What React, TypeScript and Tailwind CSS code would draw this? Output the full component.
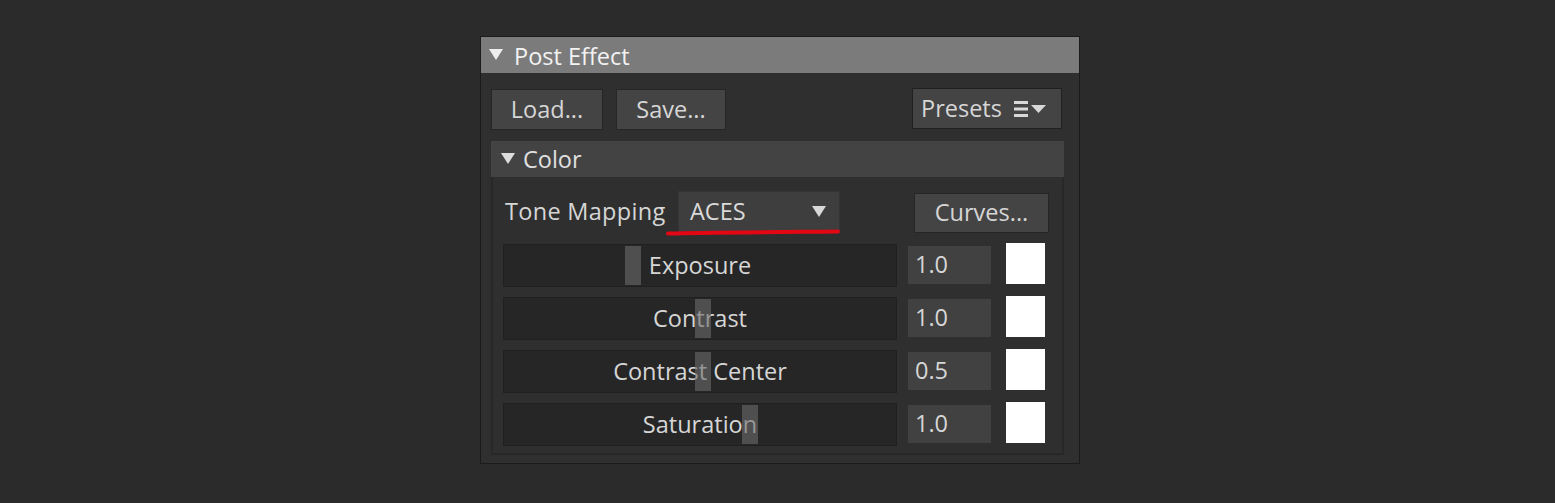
const font = { fontFamily: '"Open Sans", "Noto Sans", sans-serif' }

function Tri({ className }: { className?: string }) {
    return (
        <svg width="14" height="11" viewBox="0 0 14 11" className={className}>
            <path d="M0 0 H14 L7 11 Z" fill="currentColor" />
        </svg>
    )
}

const sliders = [
    { label: 'Exposure', value: '1.0', handle: 121 },
    { label: 'Contrast', value: '1.0', handle: 191 },
    { label: 'Contrast Center', value: '0.5', handle: 191 },
    { label: 'Saturation', value: '1.0', handle: 238 },
]

function SliderRow({ label, value, handle }: { label: string; value: string; handle: number }) {
    return (
        <div className="flex items-start h-[43px]">
            <div className="relative w-[394px] h-[43px] bg-[#262626] border border-[#202020] flex items-center justify-center text-[23.5px] text-[#d6d6d6]">
                <span>{label}</span>
                {/* slider handle drawn over the label */}
                <div
                    className="absolute top-[1px] bottom-[1px] w-[16px] bg-[#6a6a6a]/60"
                    style={{ left: handle }}
                />
            </div>
            <div className="ml-[11px] mt-[2px] w-[83px] h-[38px] bg-[#414141] flex items-center pl-[7px] text-[23.5px] text-[#d6d6d6]">
                {value}
            </div>
            <div className="ml-[15px] mt-[-1px] w-[39px] h-[41px] bg-white" />
        </div>
    )
}

export default function App() {
    return (
        <div className="w-[1555px] h-[503px] bg-[#2b2b2b] pt-[36px] pl-[480px]" style={font}>
            <div className="w-[600px] h-[428px] border border-[#1b1b1b] bg-[#2f2f2f] flex flex-col">
                {/* Header */}
                <div className="h-[36px] bg-[#7b7b7b] flex items-center pl-[8px] text-[23.5px] text-[#f2f2f2]">
                    <Tri className="text-[#eeeeee] mr-[11px] mt-[-2px]" />
                    <span className="leading-none pt-[3px]">Post Effect</span>
                </div>

                <div className="pl-[10px] pr-[15px] pt-[16px] flex flex-col">
                    {/* Load / Save / Presets */}
                    <div className="flex items-start">
                        <button className="w-[112px] h-[41px] bg-[#444444] border border-[#262626] text-[23.5px] text-[#d6d6d6]">
                            Load...
                        </button>
                        <button className="ml-[13px] w-[110px] h-[41px] bg-[#444444] border border-[#262626] text-[23.5px] text-[#d6d6d6]">
                            Save...
                        </button>
                        <button className="ml-auto mr-[2px] mt-[-1px] w-[150px] h-[41px] bg-[#444444] border border-[#202020] flex items-center pl-[8px] text-[23.5px] text-[#d6d6d6]">
                            <span>Presets</span>
                            <svg width="36" height="18" viewBox="0 0 36 18" className="ml-[12px] text-[#d8d8d8]">
                                <rect x="0" y="1" width="14" height="3" fill="currentColor" />
                                <rect x="0" y="7.5" width="14" height="3" fill="currentColor" />
                                <rect x="0" y="14" width="14" height="3" fill="currentColor" />
                                <path d="M17 5 H32 L24.5 13 Z" fill="currentColor" />
                            </svg>
                        </button>
                    </div>

                    {/* Color section */}
                    <div className="mt-[11px] h-[36px] bg-[#434343] flex items-center pl-[10px] text-[23.5px] text-[#e0e0e0]">
                        <Tri className="text-[#dddddd] mr-[8px] mt-[-2px]" />
                        <span className="leading-none pt-[2px]">Color</span>
                    </div>
                    <div className="h-[278px] border-x-[2px] border-b-[2px] border-[#282828] px-[10px] pt-[12px]">
                        <div className="relative flex items-start h-[45px]">
                            <span className="ml-[2px] w-[173px] mt-[8px] text-[23.5px] text-[#d6d6d6] leading-[28px] whitespace-nowrap tracking-[0.3px]">Tone Mapping</span>
                            <div className="mt-[2px] w-[162px] h-[41px] bg-[#3e3e3e] border border-[#353535] flex items-center pl-[11px] pr-[13px] text-[23.5px] text-[#dadada]">
                                <span>ACES</span>
                                <Tri className="ml-auto text-[#d8d8d8]" />
                            </div>
                            <button className="ml-auto mr-[3px] mt-[4px] w-[135px] h-[40px] bg-[#444444] border border-[#262626] text-[23.5px] text-[#d6d6d6]">
                                Curves...
                            </button>
                            {/* red annotation underline */}
                            <svg width="180" height="12" viewBox="0 0 180 12" className="absolute left-[161px] top-[36px]">
                                <path d="M4 8.5 C40 7.5 120 7 174 6.5" stroke="#e30613" strokeWidth="4" strokeLinecap="round" fill="none" />
                            </svg>
                        </div>
                        <div className="mt-[10px] flex flex-col gap-[10px]">
                            {sliders.map((s) => (
                                <SliderRow key={s.label} label={s.label} value={s.value} handle={s.handle} />
                            ))}
                        </div>
                    </div>
                </div>
            </div>
        </div>
    )
}
